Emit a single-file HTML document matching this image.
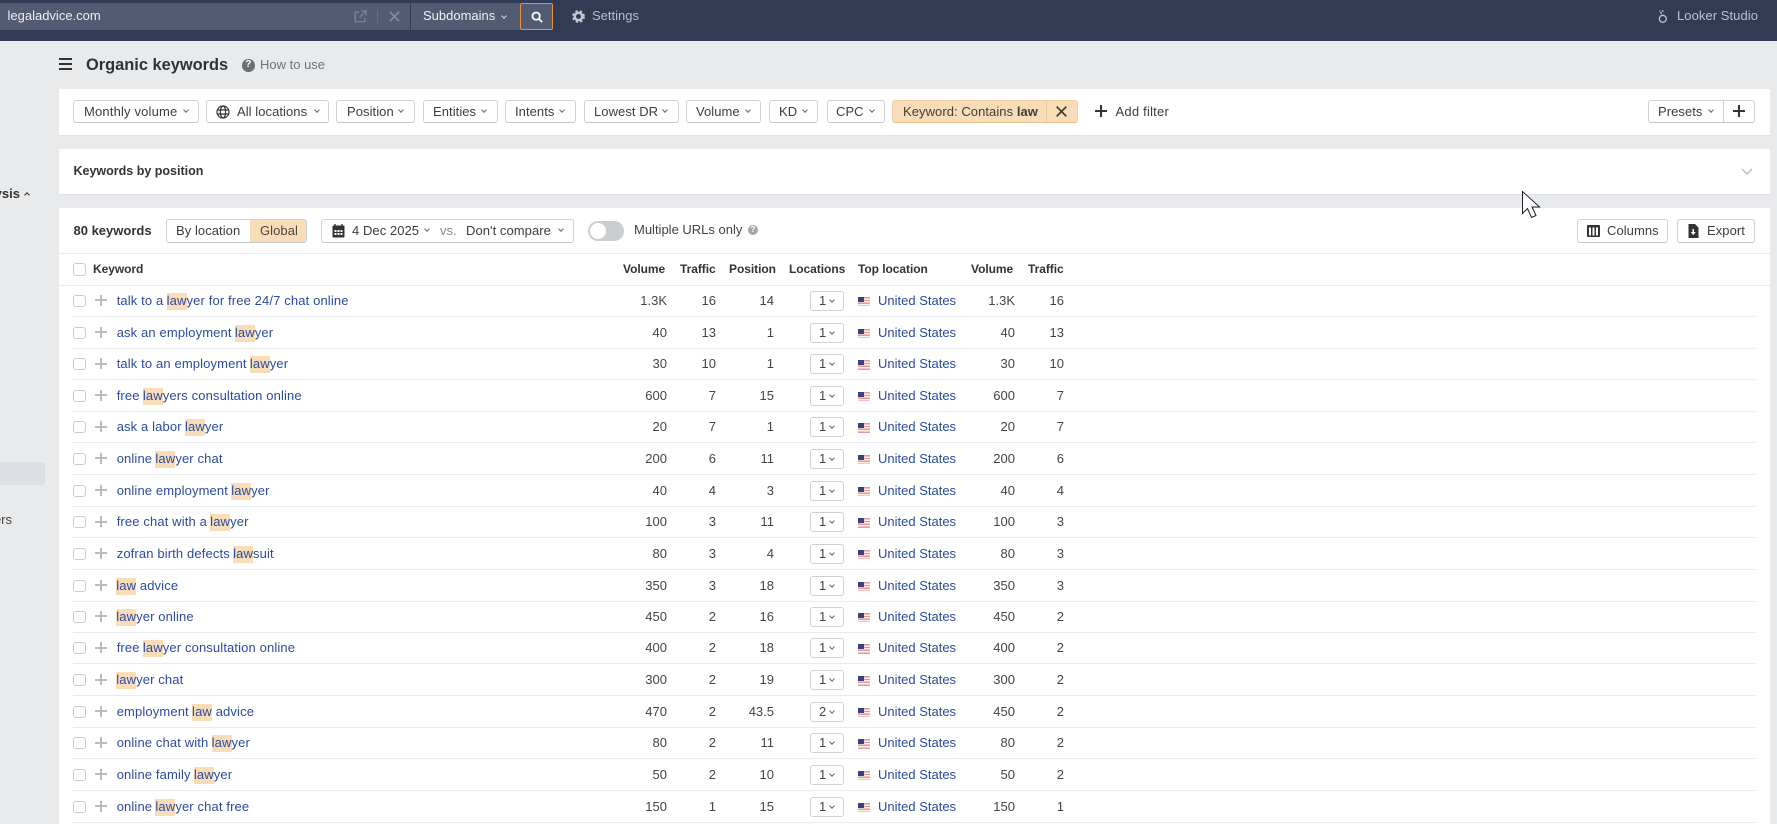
<!DOCTYPE html>
<html lang="en">
<head>
<meta charset="utf-8">
<title>Organic keywords</title>
<style>
html,body{margin:0;padding:0;width:1777px;height:824px;overflow:hidden;background:#e9eaec;font-family:"Liberation Sans",Arial,sans-serif;font-size:13px;color:#333;}
*{box-sizing:border-box}
.a{position:absolute;white-space:nowrap}
.txt{position:absolute;white-space:nowrap;line-height:16px}
.panel{position:absolute;left:59px;width:1711px;background:#fff;border-bottom:1px solid #dfe1e4}
.btn{position:absolute;top:100px;height:23px;border:1px solid #ced1d6;border-bottom-color:#c3c6cb;border-radius:3px;background:#fff;line-height:21px;white-space:nowrap;color:#3a3d42;letter-spacing:.06px}
.btn .l{position:absolute;top:0}
.ch{position:absolute;width:4px;height:4px;border-right:1px solid #666;border-bottom:1px solid #666;transform:rotate(45deg)}
.r{position:absolute;left:73px;width:1682px;height:31.6px;border-bottom:1px solid #e9eaec}
.r>*{position:absolute;top:7.5px;line-height:16px;white-space:nowrap}
.c{left:0;top:9.5px!important;width:13px;height:12px;border:1px solid #c8cacd;border-radius:3px;background:#fff;display:block}
.p{left:22px;top:9.5px!important;width:12px;height:11px;display:block;background:linear-gradient(#b9bbbe,#b9bbbe) 5px 0/2px 11px no-repeat,linear-gradient(#b9bbbe,#b9bbbe) 0 4.5px/12px 2px no-repeat}
.k{left:43.7px;color:#2b4b9e;letter-spacing:.13px}
mark{background:#f9dcb8;color:#2b4b9e;display:inline-block;height:17px;line-height:16px;margin-left:-.5px}
.n{color:#444;text-align:right;width:50px}
.v1{left:544px}.t1{left:593px}.po{left:651px}.v2{left:892px}.t2{left:941px}
.sel{left:737px;top:5.5px!important;width:33.5px;height:20px;border:1px solid #ced1d6;border-radius:3px;line-height:18px!important;padding-left:8px;color:#444;background:#fff}
.sel .ch{left:19px;top:6px}
.fl{left:785px;top:11.5px!important;width:12px;height:9.5px;display:block;background:linear-gradient(#3d4178,#3d4178) 0 0/6px 5px no-repeat,repeating-linear-gradient(#e59a9a 0 1.4px,#fbeeee 1.4px 2.8px)}
.us{left:805px;color:#2b4b9e}
.h{position:absolute;top:261px;font-weight:bold;color:#333;line-height:16px;white-space:nowrap;font-size:12px;letter-spacing:-.05px}
</style>
</head>
<body>
<!-- top bar -->
<div class="a" style="left:0;top:0;width:1777px;height:41px;background:#313b54"></div>
<div class="a" style="left:0;top:3px;width:410px;height:27px;background:#525b71"></div>
<div class="txt" style="left:7.5px;top:8px;color:#eef0f4">legaladvice.com</div>
<svg class="a" style="left:354px;top:10px" width="13" height="13" viewBox="0 0 15 15" fill="none" stroke="#7a8296" stroke-width="1.6"><path d="M6 2.5H1.5v11h11V9M8.5 1H14v5.5M14 1L6.5 8.5"/></svg>
<div class="a" style="left:377px;top:10px;width:1px;height:13px;background:#666e83"></div>
<svg class="a" style="left:389px;top:11px" width="11" height="11" viewBox="0 0 13 13" fill="none" stroke="#858c9e" stroke-width="1.8"><path d="M1 1l11 11M12 1L1 12"/></svg>
<div class="a" style="left:411px;top:3px;width:109px;height:27px;background:#525b71"></div>
<div class="txt" style="left:423px;top:8px;color:#f0f2f6">Subdomains</div>
<div class="ch" style="left:502px;top:14px;border-color:#d4d7de"></div>
<div class="a" style="left:520px;top:3px;width:33px;height:27px;background:#525b71;border:1px solid #e8923a;border-radius:2px"></div>
<svg class="a" style="left:531px;top:11px" width="12" height="12" viewBox="0 0 14 14" fill="none" stroke="#fff" stroke-width="2"><circle cx="6" cy="6" r="4.3"/><path d="M9.2 9.2l3.8 3.8"/></svg>
<svg class="a" style="left:572px;top:10px" width="13" height="13" viewBox="0 0 14 14"><circle cx="7" cy="7" r="4" fill="none" stroke="#c4c8d2" stroke-width="2.6"/><circle cx="7" cy="7" r="5.8" fill="none" stroke="#c4c8d2" stroke-width="2.2" stroke-dasharray="2.6 2.15"/></svg>
<div class="txt" style="left:592px;top:8px;color:#b7bcc9">Settings</div>
<svg class="a" style="left:1658px;top:9px" width="10" height="15" viewBox="0 0 10 15" fill="none"><circle cx="4.8" cy="9.8" r="3.5" stroke="#c2c7d2" stroke-width="1.3"/><circle cx="3" cy="4" r="1" fill="#aab0bd"/><circle cx="2" cy="2" r=".8" fill="#aab0bd"/><circle cx="4.8" cy="2.2" r=".9" fill="#aab0bd"/></svg>
<div class="txt" style="left:1677px;top:8px;color:#b9c2d2;letter-spacing:.06px">Looker Studio</div>

<!-- sidebar -->
<div class="txt" style="left:-60px;width:80px;top:186px;text-align:right;font-weight:bold;color:#333">Analysis</div>
<div class="ch" style="left:25px;top:192.5px;transform:rotate(225deg);border-color:#333"></div>
<div class="a" style="left:0;top:462px;width:45px;height:23px;background:#dcdfe4;border-radius:0 3px 3px 0"></div>
<div class="txt" style="left:-31px;width:43px;top:512px;text-align:right;color:#444">Others</div>

<!-- title -->
<div class="a" style="left:59px;top:58px;width:13px;height:2px;background:#333"></div>
<div class="a" style="left:59px;top:63px;width:13px;height:2px;background:#333"></div>
<div class="a" style="left:59px;top:68px;width:13px;height:2px;background:#333"></div>
<div class="txt" style="left:86px;top:56px;font-size:16.4px;font-weight:bold;line-height:18px;color:#2f3237">Organic keywords</div>
<div class="a" style="left:242px;top:59px;width:12.5px;height:12.5px;border-radius:50%;background:#6b6e73;color:#fff;font-size:10px;font-weight:bold;line-height:12.5px;text-align:center">?</div>
<div class="txt" style="left:260px;top:57px;color:#6f7277">How to use</div>

<!-- filters -->
<div class="panel" style="top:89px;height:47px"></div>
<div class="btn" style="left:73px;width:126px"><span class="l" style="left:10px;letter-spacing:.17px">Monthly volume</span><i class="ch" style="left:110px;top:7px"></i></div>
<div class="btn" style="left:206px;width:123px">
<svg style="position:absolute;left:9px;top:3.5px" width="14" height="14" viewBox="0 0 14 14" fill="none" stroke="#333" stroke-width="1.2"><circle cx="7" cy="7" r="6"/><ellipse cx="7" cy="7" rx="2.6" ry="6"/><path d="M1 5h12M1 9h12"/></svg>
<span class="l" style="left:30px">All locations</span><i class="ch" style="left:108px;top:7px"></i></div>
<div class="btn" style="left:336px;width:79px"><span class="l" style="left:10px">Position</span><i class="ch" style="left:62px;top:7px"></i></div>
<div class="btn" style="left:423px;width:75px"><span class="l" style="left:9px">Entities</span><i class="ch" style="left:58px;top:7px"></i></div>
<div class="btn" style="left:505px;width:71px"><span class="l" style="left:9px">Intents</span><i class="ch" style="left:54px;top:7px"></i></div>
<div class="btn" style="left:584px;width:95px"><span class="l" style="left:9px">Lowest DR</span><i class="ch" style="left:78px;top:7px"></i></div>
<div class="btn" style="left:686px;width:75px"><span class="l" style="left:9px">Volume</span><i class="ch" style="left:59px;top:7px"></i></div>
<div class="btn" style="left:769px;width:49px"><span class="l" style="left:9px">KD</span><i class="ch" style="left:33px;top:7px"></i></div>
<div class="btn" style="left:827px;width:58px"><span class="l" style="left:8px">CPC</span><i class="ch" style="left:42px;top:7px"></i></div>
<div class="btn" style="left:892px;width:186px;background:#f9dcb8;border-color:#f0cfa6;border-bottom-color:#e8c294"><span class="l" style="left:10px;color:#3f3d3a">Keyword: Contains <b>law</b></span><i style="position:absolute;left:153px;top:0;width:1px;height:21px;background:#ecc99e"></i>
<svg style="position:absolute;left:163px;top:5px" width="11" height="11" viewBox="0 0 11 11" fill="none" stroke="#333" stroke-width="1.6"><path d="M.7.7l9.6 9.6M10.3.7L.7 10.3"/></svg></div>
<div class="a" style="left:1095px;top:110px;width:12px;height:2px;background:#333"></div>
<div class="a" style="left:1100px;top:105px;width:2px;height:12px;background:#333"></div>
<div class="txt" style="left:1115.5px;top:104px;color:#3a3d42;letter-spacing:.22px">Add filter</div>
<div class="btn" style="left:1648px;width:107px"><span class="l" style="left:9px">Presets</span><i class="ch" style="left:60px;top:7px"></i><i style="position:absolute;left:74px;top:0;width:1px;height:21px;background:#ced1d6"></i></div>
<div class="a" style="left:1733px;top:110px;width:12px;height:2px;background:#333"></div>
<div class="a" style="left:1738px;top:105px;width:2px;height:12px;background:#333"></div>

<!-- keywords by position -->
<div class="panel" style="top:149px;height:46px"></div>
<div class="txt" style="left:73.5px;top:163px;font-weight:bold;color:#333;font-size:12.5px">Keywords by position</div>
<svg class="a" style="left:1741px;top:168px" width="12" height="8" viewBox="0 0 12 8" fill="none" stroke="#b6b8bc" stroke-width="1.4"><path d="M1 1l5 5 5-5"/></svg>

<!-- table panel -->
<div class="a" style="left:59px;top:208px;width:1711px;height:616px;background:#fff"></div>
<div class="txt" style="left:73.5px;top:223px;font-weight:bold;color:#333;font-size:13px">80 keywords</div>
<div class="btn" style="left:166px;top:219px;width:141px;height:24px"><span class="l" style="left:9px;top:0">By location</span><i style="position:absolute;left:83px;top:0;width:56px;height:22px;background:#f9dcb8;border-radius:0 2px 2px 0"></i><span class="l" style="left:93px;top:0;color:#4a4640">Global</span></div>
<div class="btn" style="left:321px;top:219px;width:253px;height:24px">
<svg style="position:absolute;left:10px;top:4px" width="13" height="14" viewBox="0 0 13 14"><rect x="0.5" y="1.5" width="12" height="12" rx="1" fill="#333"/><path d="M3 0v3M10 0v3" stroke="#333" stroke-width="1.4"/><path d="M2.5 6h2v2h-2zM5.5 6h2v2h-2zM8.5 6h2v2h-2zM2.5 9h2v2h-2zM5.5 9h2v2h-2zM8.5 9h2v2h-2z" fill="#fff"/></svg>
<span class="l" style="left:30px;top:0">4 Dec 2025</span><i class="ch" style="left:103px;top:7px"></i><span class="l" style="left:118px;top:0;color:#85888d">vs.</span><span class="l" style="left:144px;top:0">Don't compare</span><i class="ch" style="left:237px;top:7px"></i></div>
<div class="a" style="left:588px;top:221px;width:36px;height:20px;border-radius:10px;background:#cccdcf"></div>
<div class="a" style="left:590px;top:223px;width:16px;height:16px;border-radius:50%;background:#fff"></div>
<div class="txt" style="left:634px;top:222px;color:#3f4247">Multiple URLs only</div>
<div class="a" style="left:748px;top:225px;width:10px;height:10px;border-radius:50%;background:#a4a6a9;color:#fff;font-size:8px;font-weight:bold;line-height:10px;text-align:center">?</div>
<div class="btn" style="left:1577px;top:219px;width:91px;height:24px">
<svg style="position:absolute;left:9px;top:5px" width="13" height="12" viewBox="0 0 13 12"><rect width="13" height="12" rx="1" fill="#333"/><path d="M2 2.5h2v8H2zM5.5 2.5h2v8h-2zM9 2.5h2v8H9z" fill="#fff"/></svg>
<span class="l" style="left:29px;top:0">Columns</span></div>
<div class="btn" style="left:1677px;top:219px;width:78px;height:24px">
<svg style="position:absolute;left:10px;top:4px" width="11" height="14" viewBox="0 0 11 14"><path d="M1 0h6.5L11 3.5V14H1z" fill="#333" transform="translate(-.5)"/><path d="M4.5 5h1.5v3h1.8L5.2 11 2.7 8h1.8z" fill="#fff"/></svg>
<span class="l" style="left:29px;top:0">Export</span></div>
<div class="a" style="left:59px;top:253px;width:1711px;height:1px;background:#e9eaec"></div>
<div class="a" style="left:59px;top:285px;width:1711px;height:1px;background:#e9eaec"></div>

<!-- table header -->
<div class="a" style="left:73px;top:263px;width:13px;height:13px;border:1px solid #c8cacd;border-radius:3px"></div>
<div class="h" style="left:93px">Keyword</div>
<div class="h" style="left:623px">Volume</div>
<div class="h" style="left:680px">Traffic</div>
<div class="h" style="left:729px">Position</div>
<div class="h" style="left:789px">Locations</div>
<div class="h" style="left:858px">Top location</div>
<div class="h" style="left:971px">Volume</div>
<div class="h" style="left:1028px">Traffic</div>

<!-- rows -->
<div class="r" style="top:285.3px"><i class="c"></i><i class="p"></i><span class="k">talk to a <mark>law</mark>yer for free 24/7 chat online</span><span class="n v1">1.3K</span><span class="n t1">16</span><span class="n po">14</span><span class="sel">1<i class="ch"></i></span><i class="fl"></i><span class="us">United States</span><span class="n v2">1.3K</span><span class="n t2">16</span></div>
<div class="r" style="top:317.2px"><i class="c"></i><i class="p"></i><span class="k">ask an employment <mark>law</mark>yer</span><span class="n v1">40</span><span class="n t1">13</span><span class="n po">1</span><span class="sel">1<i class="ch"></i></span><i class="fl"></i><span class="us">United States</span><span class="n v2">40</span><span class="n t2">13</span></div>
<div class="r" style="top:348.5px"><i class="c"></i><i class="p"></i><span class="k">talk to an employment <mark>law</mark>yer</span><span class="n v1">30</span><span class="n t1">10</span><span class="n po">1</span><span class="sel">1<i class="ch"></i></span><i class="fl"></i><span class="us">United States</span><span class="n v2">30</span><span class="n t2">10</span></div>
<div class="r" style="top:380.1px"><i class="c"></i><i class="p"></i><span class="k">free <mark>law</mark>yers consultation online</span><span class="n v1">600</span><span class="n t1">7</span><span class="n po">15</span><span class="sel">1<i class="ch"></i></span><i class="fl"></i><span class="us">United States</span><span class="n v2">600</span><span class="n t2">7</span></div>
<div class="r" style="top:411.7px"><i class="c"></i><i class="p"></i><span class="k">ask a labor <mark>law</mark>yer</span><span class="n v1">20</span><span class="n t1">7</span><span class="n po">1</span><span class="sel">1<i class="ch"></i></span><i class="fl"></i><span class="us">United States</span><span class="n v2">20</span><span class="n t2">7</span></div>
<div class="r" style="top:443.3px"><i class="c"></i><i class="p"></i><span class="k">online <mark>law</mark>yer chat</span><span class="n v1">200</span><span class="n t1">6</span><span class="n po">11</span><span class="sel">1<i class="ch"></i></span><i class="fl"></i><span class="us">United States</span><span class="n v2">200</span><span class="n t2">6</span></div>
<div class="r" style="top:475.2px"><i class="c"></i><i class="p"></i><span class="k">online employment <mark>law</mark>yer</span><span class="n v1">40</span><span class="n t1">4</span><span class="n po">3</span><span class="sel">1<i class="ch"></i></span><i class="fl"></i><span class="us">United States</span><span class="n v2">40</span><span class="n t2">4</span></div>
<div class="r" style="top:506.5px"><i class="c"></i><i class="p"></i><span class="k">free chat with a <mark>law</mark>yer</span><span class="n v1">100</span><span class="n t1">3</span><span class="n po">11</span><span class="sel">1<i class="ch"></i></span><i class="fl"></i><span class="us">United States</span><span class="n v2">100</span><span class="n t2">3</span></div>
<div class="r" style="top:538.1px"><i class="c"></i><i class="p"></i><span class="k">zofran birth defects <mark>law</mark>suit</span><span class="n v1">80</span><span class="n t1">3</span><span class="n po">4</span><span class="sel">1<i class="ch"></i></span><i class="fl"></i><span class="us">United States</span><span class="n v2">80</span><span class="n t2">3</span></div>
<div class="r" style="top:570.1px"><i class="c"></i><i class="p"></i><span class="k"><mark>law</mark> advice</span><span class="n v1">350</span><span class="n t1">3</span><span class="n po">18</span><span class="sel">1<i class="ch"></i></span><i class="fl"></i><span class="us">United States</span><span class="n v2">350</span><span class="n t2">3</span></div>
<div class="r" style="top:601.3px"><i class="c"></i><i class="p"></i><span class="k"><mark>law</mark>yer online</span><span class="n v1">450</span><span class="n t1">2</span><span class="n po">16</span><span class="sel">1<i class="ch"></i></span><i class="fl"></i><span class="us">United States</span><span class="n v2">450</span><span class="n t2">2</span></div>
<div class="r" style="top:632.9px"><i class="c"></i><i class="p"></i><span class="k">free <mark>law</mark>yer consultation online</span><span class="n v1">400</span><span class="n t1">2</span><span class="n po">18</span><span class="sel">1<i class="ch"></i></span><i class="fl"></i><span class="us">United States</span><span class="n v2">400</span><span class="n t2">2</span></div>
<div class="r" style="top:664.5px"><i class="c"></i><i class="p"></i><span class="k"><mark>law</mark>yer chat</span><span class="n v1">300</span><span class="n t1">2</span><span class="n po">19</span><span class="sel">1<i class="ch"></i></span><i class="fl"></i><span class="us">United States</span><span class="n v2">300</span><span class="n t2">2</span></div>
<div class="r" style="top:696.1px"><i class="c"></i><i class="p"></i><span class="k">employment <mark>law</mark> advice</span><span class="n v1">470</span><span class="n t1">2</span><span class="n po">43.5</span><span class="sel">2<i class="ch"></i></span><i class="fl"></i><span class="us">United States</span><span class="n v2">450</span><span class="n t2">2</span></div>
<div class="r" style="top:727.7px"><i class="c"></i><i class="p"></i><span class="k">online chat with <mark>law</mark>yer</span><span class="n v1">80</span><span class="n t1">2</span><span class="n po">11</span><span class="sel">1<i class="ch"></i></span><i class="fl"></i><span class="us">United States</span><span class="n v2">80</span><span class="n t2">2</span></div>
<div class="r" style="top:759.3px"><i class="c"></i><i class="p"></i><span class="k">online family <mark>law</mark>yer</span><span class="n v1">50</span><span class="n t1">2</span><span class="n po">10</span><span class="sel">1<i class="ch"></i></span><i class="fl"></i><span class="us">United States</span><span class="n v2">50</span><span class="n t2">2</span></div>
<div class="r" style="top:791.2px"><i class="c"></i><i class="p"></i><span class="k">online <mark>law</mark>yer chat free</span><span class="n v1">150</span><span class="n t1">1</span><span class="n po">15</span><span class="sel">1<i class="ch"></i></span><i class="fl"></i><span class="us">United States</span><span class="n v2">150</span><span class="n t2">1</span></div>

<!-- cursor -->
<svg class="a" style="left:1522px;top:191px" width="19" height="28" viewBox="0 0 19 28"><path d="M.5.5v22l5-5 4 9 4.5-2-4-8.5h7.5z" fill="#fff" stroke="#1c2129" stroke-width="1"/></svg>
</body>
</html>
